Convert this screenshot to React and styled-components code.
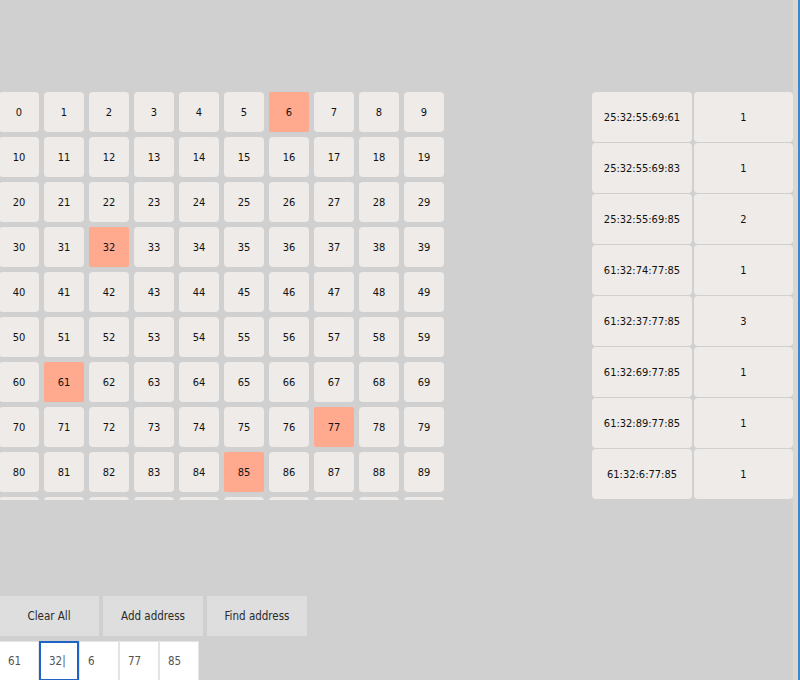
import React from "react"
import styled, { createGlobalStyle } from "styled-components"

const GlobalStyle = createGlobalStyle`
  html, body {
    margin: 0;
    padding: 0;
    background: #d0d0d0;
  }
  body {
    font-family: "DejaVu Sans Condensed", "DejaVu Sans", "Liberation Sans", sans-serif;
    font-size: 11px;
    color: #111;
  }
`

const Page = styled.div`
  width: 800px;
  height: 680px;
  box-sizing: border-box;
  overflow: hidden;
  padding-top: 92px;
  box-shadow: inset -2px 0 0 #3d87cc, inset -7px 0 0 #dcd7d3;
`

const Main = styled.div`
  display: flex;
  align-items: flex-start;
  height: 408px;
`

const Board = styled.div`
  margin-left: -1px;
  width: 445px;
  height: 408px;
  overflow: hidden;
  display: grid;
  grid-template-columns: repeat(10, 40px);
  grid-auto-rows: 40px;
  gap: 5px;
`

const Cell = styled.div`
  display: flex;
  align-items: center;
  justify-content: center;
  background: ${(p) => (p.$active ? "#ffa98f" : "#eeebe8")};
  border-radius: ${(p) => (p.$active ? "2px" : "4px")};
  color: #111;
`

const Table = styled.div`
  margin-left: auto;
  margin-right: 7px;
  display: grid;
  grid-template-columns: 100px 99px;
  grid-auto-rows: 50px;
  column-gap: 2px;
  row-gap: 1px;
`

const TableCell = styled.div`
  display: flex;
  align-items: center;
  justify-content: center;
  background: #eeebe8;
  border-radius: 4px;
  color: #111;
`

const Controls = styled.div`
  margin-top: 96px;
  margin-left: -1px;
  display: flex;
  flex-direction: column;
  gap: 5px;
`

const Buttons = styled.div`
  display: flex;
  gap: 4px;
`

const Button = styled.button`
  width: 100px;
  height: 40px;
  border: none;
  border-radius: 0;
  background: #dedede;
  color: #2a2a2a;
  font-family: inherit;
  font-size: 11.5px;
  padding: 0;
`

const Inputs = styled.div`
  display: flex;
`

const Field = styled.input`
  width: 40px;
  height: 40px;
  box-sizing: border-box;
  margin: 0;
  padding: 0 0 0 8px;
  background: #fff;
  border: ${(p) => (p.$focused ? "2px solid #1f63c6" : "1px solid #e4e4e4")};
  outline: none;
  font-family: inherit;
  font-size: 11.5px;
  color: #555;
`

const active = [6, 32, 61, 77, 85]

const results = [
  ["25:32:55:69:61", 1],
  ["25:32:55:69:83", 1],
  ["25:32:55:69:85", 2],
  ["61:32:74:77:85", 1],
  ["61:32:37:77:85", 3],
  ["61:32:69:77:85", 1],
  ["61:32:89:77:85", 1],
  ["61:32:6:77:85", 1],
]

const address = ["61", "32|", "6", "77", "85"]

const App = () => {
  return (
    <Page>
      <GlobalStyle />
      <Main>
        <Board>
          {Array.from({ length: 100 }, (_, i) => (
            <Cell key={i} $active={active.includes(i)}>
              {i}
            </Cell>
          ))}
        </Board>
        <Table>
          {results.map(([key, count]) => (
            <React.Fragment key={key}>
              <TableCell>{key}</TableCell>
              <TableCell>{count}</TableCell>
            </React.Fragment>
          ))}
        </Table>
      </Main>
      <Controls>
        <Buttons>
          <Button>Clear All</Button>
          <Button>Add address</Button>
          <Button>Find address</Button>
        </Buttons>
        <Inputs>
          {address.map((v, i) => (
            <Field
              key={i}
              readOnly
              $focused={v.endsWith("|")}
              value={v}
            />
          ))}
        </Inputs>
      </Controls>
    </Page>
  )
}

export default App
